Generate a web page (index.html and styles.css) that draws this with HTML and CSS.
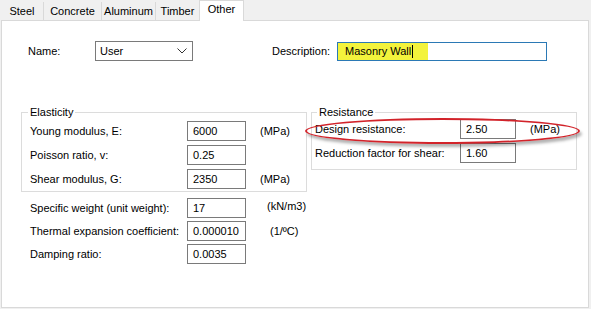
FILE: index.html
```html
<!DOCTYPE html>
<html lang="en">
<head>
    <meta charset="UTF-8">
    <meta name="viewport" content="width=device-width, initial-scale=1.0">
    <title>Material properties</title>
    <link rel="stylesheet" href="styles.css">
</head>
<body>
    <div class="window">
        <nav class="tabs">
            <span class="tab steel">Steel</span>
            <span class="tab concrete">Concrete</span>
            <span class="tab aluminum">Aluminum</span>
            <span class="tab timber">Timber</span>
            <span class="tab other active">Other</span>
        </nav>
        <main class="panel">
            <div class="top-row">
                <span class="name-label">Name:</span>
                <div class="combo">
                    <span>User</span>
                    <svg width="10" height="6" viewBox="0 0 10 6"><polyline points="0.5,0.5 5,5 9.5,0.5" fill="none" stroke="#333" stroke-width="1"/></svg>
                </div>
                <span class="desc-label">Description:</span>
                <div class="desc-input">
                    <span class="highlight">Masonry Wall<span class="caret"></span></span>
                </div>
            </div>
            <div class="groups">
                <fieldset class="group elasticity">
                    <legend>Elasticity</legend>
                    <div class="row">
                        <span class="label">Young modulus, E:</span>
                        <span class="field">6000</span>
                        <span class="unit">(MPa)</span>
                    </div>
                    <div class="row">
                        <span class="label">Poisson ratio, v:</span>
                        <span class="field">0.25</span>
                    </div>
                    <div class="row">
                        <span class="label">Shear modulus, G:</span>
                        <span class="field">2350</span>
                        <span class="unit">(MPa)</span>
                    </div>
                </fieldset>
                <fieldset class="group resistance">
                    <legend>Resistance</legend>
                    <div class="row marked">
                        <span class="label">Design resistance:</span>
                        <span class="field">2.50</span>
                        <span class="unit">(MPa)</span>
                        <span class="ellipse"></span>
                    </div>
                    <div class="row">
                        <span class="label">Reduction factor for shear:</span>
                        <span class="field">1.60</span>
                    </div>
                </fieldset>
            </div>
            <div class="props">
                <div class="row">
                    <span class="label">Specific weight (unit weight):</span>
                    <span class="field">17</span>
                    <span class="unit weight-unit">(kN/m3)</span>
                </div>
                <div class="row">
                    <span class="label">Thermal expansion coefficient:</span>
                    <span class="field">0.000010</span>
                    <span class="unit temp-unit">(1/ºC)</span>
                </div>
                <div class="row">
                    <span class="label">Damping ratio:</span>
                    <span class="field">0.0035</span>
                </div>
            </div>
        </main>
    </div>
</body>
</html>
```

FILE: styles.css
```css
*,*::before,*::after
{
    box-sizing: border-box;
}
body
{
    margin: 0;
    background-color: #f0f0f0;
    font-family: "Liberation Sans", Arial, sans-serif;
    font-size: 11px;
    color: #000;
}
.window
{
    width: 591px;
    height: 309px;
    overflow: hidden;
}
/* tab strip */
.tabs
{
    display: flex;
    align-items: flex-end;
    height: 20px;
    margin-left: 1px;
}
.tab
{
    height: 18px;
    line-height: 19px;
    text-align: center;
    border-left: 1px solid #d9d9d9;
    color: #000;
    white-space: nowrap;
}
.tab:first-child
{
    border-left: none;
}
.tab.steel { width: 42px; }
.tab.concrete { width: 58px; }
.tab.aluminum { width: 54px; }
.tab.timber { width: 44px; }
.tab.other { width: 45px; }
.tab.active
{
    position: relative;
    z-index: 1;
    height: 21px;
    line-height: 17px;
    margin-bottom: -1px;
    background-color: #fff;
    border: 1px solid #d9d9d9;
    border-bottom: none;
}
/* page */
.panel
{
    width: 588px;
    height: 288px;
    margin-left: 1px;
    background-color: #fff;
    border: 1px solid #d9d9d9;
}
.top-row
{
    display: flex;
    align-items: center;
    margin-top: 20px;
    padding-left: 26px;
    white-space: nowrap;
}
.name-label
{
    width: 67px;
}
.combo
{
    display: flex;
    align-items: center;
    justify-content: space-between;
    width: 98px;
    height: 20px;
    padding: 0 5px 0 4px;
    border: 1px solid #7a7a7a;
}
.desc-label
{
    margin-left: 79px;
    width: 65px;
}
.desc-input
{
    display: flex;
    width: 210px;
    height: 19px;
    border: 1px solid #2b79b5;
}
.highlight
{
    display: flex;
    align-items: center;
    width: 90px;
    height: 100%;
    padding-left: 7px;
    background-color: #f3f33c;
}
.caret
{
    width: 1px;
    height: 13px;
    margin-left: 1px;
    background-color: #000;
}
/* groups */
.groups
{
    display: flex;
    align-items: flex-start;
    gap: 4px;
    margin-top: 44px;
    margin-left: 19px;
}
.group
{
    margin: 0;
    border: 1px solid #dcdcdc;
}
.group legend
{
    padding: 0 2px;
    line-height: 14px;
}
.elasticity
{
    display: flex;
    flex-direction: column;
    gap: 4px;
    width: 286px;
    padding: 2px 0 2px 8px;
}
.elasticity legend
{
    margin-left: -2px;
}
.resistance
{
    display: flex;
    flex-direction: column;
    gap: 4px;
    width: 266px;
    padding: 0 0 6px 3px;
}
.resistance legend
{
    margin-left: 2px;
}
.row
{
    display: flex;
    align-items: center;
    height: 20px;
    white-space: nowrap;
}
.label
{
    width: 157px;
}
.resistance .label
{
    width: 145px;
}
.field
{
    display: flex;
    align-items: center;
    width: 59px;
    height: 20px;
    padding-left: 5px;
    border: 1px solid #7a7a7a;
}
.resistance .field
{
    width: 56px;
}
.unit
{
    margin-left: 14px;
}
.marked
{
    position: relative;
}
.ellipse
{
    position: absolute;
    left: -10px;
    top: -1px;
    width: 275px;
    height: 26px;
    border: 2px solid #d2232a;
    border-radius: 50%;
    box-shadow: 2px 3px 3px rgba(0, 0, 0, 0.3);
}
/* lower properties */
.props
{
    display: flex;
    flex-direction: column;
    gap: 3px;
    margin-top: 6px;
    margin-left: 28px;
}
.weight-unit
{
    margin-left: 21px;
    margin-top: -4px;
}
.temp-unit
{
    margin-left: 24px;
}
```
